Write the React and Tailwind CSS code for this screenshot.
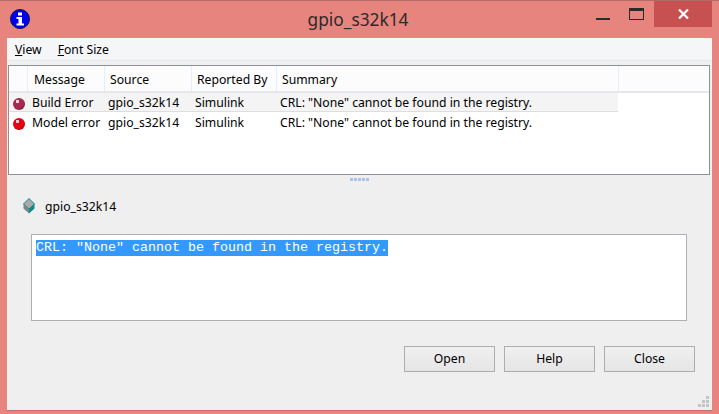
import React from 'react';

const columns = ['Message', 'Source', 'Reported By', 'Summary'];

const rows = [
  { id: 1, message: 'Build Error', color: '#a8294f', shade: '#6d1c3c', selected: true },
  { id: 2, message: 'Model error', color: '#e60012', shade: '#a00010', selected: false },
];

const uiFont = "font-['Noto_Sans',sans-serif]";

const InfoIcon = () => (
  <svg width="20" height="20" viewBox="0 0 20 20" className="shrink-0">
    <circle cx="10" cy="10" r="9.5" fill="#0000f0" stroke="#10104a" />
    <rect x="8" y="3.5" width="4" height="3" fill="#fff" />
    <path d="M6.5 8h5.5v6.5h2v2h-7.5v-2h2v-4.500h-2z" fill="#fff" />
  </svg>
);

const Ball = ({ id, color, shade }) => (
  <svg width="14" height="14" viewBox="0 0 14 14" className="shrink-0">
    <defs>
      <radialGradient id={`ball${id}`} cx="0.4" cy="0.35" r="0.7">
        <stop offset="0" stopColor={color} />
        <stop offset="0.7" stopColor={color} />
        <stop offset="1" stopColor={shade} />
      </radialGradient>
    </defs>
    <circle cx="7" cy="7" r="6" fill={`url(#ball${id})`} />
    <rect x="4" y="3" width="3" height="3" fill="#fff" opacity="0.8" />
  </svg>
);

const ModelIcon = () => (
  <svg width="12" height="16" viewBox="0 0 12 16" className="shrink-0">
    <path d="M6 0.500L11.500 6 6 11 0.500 6z" fill="#a9a9a9" stroke="#0c8a8a" />
    <path d="M0.500 6L6 11V15.500L0.500 10.500z" fill="#7f8484" />
    <path d="M11.500 6L6 11V15.500L11.500 10.500z" fill="#0c8a8a" />
  </svg>
);

const App = () => (
  <div className={`w-[719px] h-[414px] overflow-hidden flex flex-col bg-[#e8847e] border-t border-[#b46a66] text-[12.2px] text-black ${uiFont}`}>
    {/* Title bar */}
    <div className="h-[37px] flex items-start pl-[10px] pr-[7px]">
      <div className="pt-[8px]"><InfoIcon /></div>
      <div className="flex-1 pt-[7px] pl-[90px] text-center text-[17.3px] leading-[24px] text-[#2a2a2a]">gpio_s32k14</div>
      <div className="flex items-start">
        <div className="w-[14px] h-[2px] mt-[17px] bg-[#2b2b2b]" />
        <div className="w-[15px] h-[12px] mt-[7px] ml-[19px] border border-[#2b2b2b] border-t-[3px]" />
        <div className="w-[58px] h-[26px] ml-[10px] bg-[#c75050] flex items-center justify-center">
          <svg width="11" height="10" viewBox="0 0 11 10">
            <path d="M1 0.500L10 9.500M10 0.500L1 9.500" stroke="#fff" strokeWidth="2.200" />
          </svg>
        </div>
      </div>
    </div>

    {/* Window */}
    <div className="w-[705px] h-[373px] ml-[7px] flex flex-col bg-[#efefef] border-b border-[#c96a66]">
      <div className="h-[23px] flex items-center gap-[16px] pl-[8px] pt-[2px] bg-[#f5f6f8] border-b border-[#e8e8e8]">
        <span><span className="underline">V</span>iew</span>
        <span><span className="underline">F</span>ont Size</span>
      </div>

      {/* Message table */}
      <div className="h-[110px] mt-[4px] ml-px mr-[2px] bg-white border border-[#8f9198]">
        <div className="h-[27px] flex bg-[#fcfcfc] border-b-2 border-[#e6e7ea]">
          <div className="w-[19px] border-r border-[#e6eefa]" />
          {columns.map((name, i) => (
            <div
              key={name}
              className={`flex items-center pt-[4px] border-r border-[#e6eefa] ${['w-[77px] pl-[6px]', 'w-[87px] pl-[5px]', 'w-[85px] pl-[5px]', 'w-[342px] pl-[5px]'][i]}`}
            >
              {name}
            </div>
          ))}
        </div>
        {rows.map((row) => (
          <div
            key={row.id}
            className={`w-[609px] flex items-center pt-[3px] border-b ${row.selected ? 'h-[19px] bg-[#f4f4f4] border-[#dedede]' : 'h-[21px] bg-white border-white'}`}
          >
            <div className="w-[21px] pl-[3px]"><Ball id={row.id} color={row.color} shade={row.shade} /></div>
            <div className="w-[78px] pl-[2px]">{row.message}</div>
            <div className="w-[87px]">gpio_s32k14</div>
            <div className="w-[85px]">Simulink</div>
            <div>CRL: "None" cannot be found in the registry.</div>
          </div>
        ))}
      </div>

      {/* Splitter */}
      <div className="h-[9px] flex items-center justify-center gap-px">
        {[0, 1, 2, 3, 4].map((dot) => (
          <div key={dot} className="w-[3px] h-[3px] bg-[#a9c4e8]" />
        ))}
      </div>

      {/* Details */}
      <div className="flex items-center gap-[10px] pl-[16px] pt-[10px] h-[33px]">
        <ModelIcon />
        <span className="pt-[4px]">gpio_s32k14</span>
      </div>
      <div className="h-[87px] mt-[17px] ml-[24px] mr-[25px] bg-white border border-[#aeaeb4] pl-[4px] pt-[3px]">
        <span className="bg-[#3399ff] text-white text-[13.33px] leading-[16px] inline-block font-['Liberation_Mono',monospace]">
          CRL: "None" cannot be found in the registry.
        </span>
      </div>

      {/* Buttons */}
      <div className="flex justify-end gap-[9px] mt-[25px] pr-[17px]">
        {['Open', 'Help', 'Close'].map((label) => (
          <button
            key={label}
            className="w-[91px] h-[26px] pt-px border border-[#adadad] bg-gradient-to-b from-[#f0f0f0] to-[#e5e5e5] text-[12.2px]"
          >
            {label}
          </button>
        ))}
      </div>

      {/* Resize grip */}
      <div className="flex-1 flex justify-end items-end pr-[3px] pb-[3px]">
        <svg width="11" height="11" viewBox="0 0 11 11" fill="#c4c4c4">
          <rect x="8" y="0" width="3" height="3" />
          <rect x="4" y="4" width="3" height="3" />
          <rect x="8" y="4" width="3" height="3" />
          <rect x="0" y="8" width="3" height="3" />
          <rect x="4" y="8" width="3" height="3" />
          <rect x="8" y="8" width="3" height="3" />
        </svg>
      </div>
    </div>
  </div>
);

export default App;
